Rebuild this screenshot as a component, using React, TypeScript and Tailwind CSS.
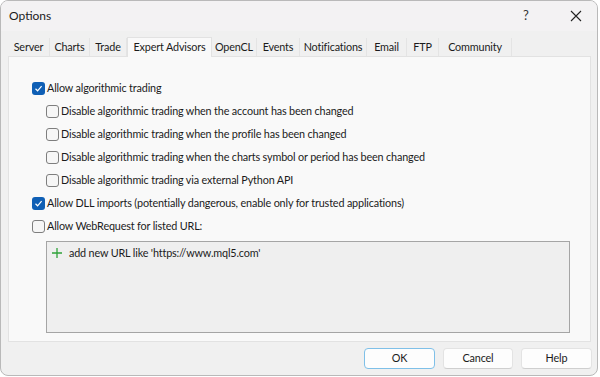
import React from "react";

const tabs = [
  { label: "Server", w: "w-[42px]" },
  { label: "Charts", w: "w-[40px]" },
  { label: "Trade", w: "w-[37px]" },
  { label: "Expert Advisors", w: "w-[85px]", active: true },
  { label: "OpenCL", w: "w-[45px]" },
  { label: "Events", w: "w-[43px]" },
  { label: "Notifications", w: "w-[67px]" },
  { label: "Email", w: "w-[40px]" },
  { label: "FTP", w: "w-[32px]" },
  { label: "Community", w: "w-[73px]" },
];

function Box({ checked }: { checked?: boolean }) {
  if (checked) {
    return (
      <span className="w-[13px] h-[13px] rounded-[3px] bg-[#0f5fb5] flex items-center justify-center shrink-0">
        <svg width="9" height="9" viewBox="0 0 9 9">
          <path d="M1.5 4.8 L3.6 6.8 L7.6 2.2" fill="none" stroke="#fff" strokeWidth="1.2" />
        </svg>
      </span>
    );
  }
  return <span className="w-[13px] h-[13px] rounded-[3px] border border-[#7e7e7e] bg-[#f6f6f6] shrink-0" />;
}

function Row({ label, checked, sub }: { label: string; checked?: boolean; sub?: boolean }) {
  return (
    <div className={`h-[23px] flex items-center gap-[2px] ${sub ? "pl-[37px]" : "pl-[23px]"}`}>
      <Box checked={checked} />
      <span>{label}</span>
    </div>
  );
}

export default function App() {
  return (
    <div className="w-[600px] h-[377px] bg-white" style={{ fontFamily: 'Lato, "Liberation Sans", sans-serif' }}>
      <div className="w-[598px] h-[376px] rounded-[8px] border border-[#b9b9b9] bg-[#f0f0f0] flex flex-col text-[10.8px] tracking-[-0.15px] text-[#1b1b1b] overflow-hidden">
        <div className="h-[30px] flex items-center bg-[#f3f2f3] shrink-0">
          <span className="pl-[8px] text-[12px] tracking-normal flex-1">Options</span>
          <span className="w-[14px] text-[13px] text-[#333] mr-[33px]">?</span>
          <svg width="12" height="12" viewBox="0 0 12 12" className="mr-[15px]">
            <path d="M1 1 L11 11 M11 1 L1 11" stroke="#222" strokeWidth="1.1" />
          </svg>
        </div>
        <div className="flex items-end h-[25px] pl-[7px] shrink-0">
          {tabs.map((t) =>
            t.active ? (
              <div
                key={t.label}
                className={`${t.w} h-[20px] bg-[#f9f9f9] border border-b-0 border-[#e2e2e2] flex items-center justify-center -mb-px relative z-10`}
              >
                {t.label}
              </div>
            ) : (
              <div key={t.label} className={`${t.w} h-[18px] border-r border-[#e4e4e4] flex items-center justify-center`}>
                {t.label}
              </div>
            )
          )}
        </div>
        <div className="ml-[7px] w-[583px] h-[286px] bg-[#f9f9f9] border border-[#e2e2e2] pt-[20px]">
          <Row label="Allow algorithmic trading" checked />
          <Row sub label="Disable algorithmic trading when the account has been changed" />
          <Row sub label="Disable algorithmic trading when the profile has been changed" />
          <Row sub label="Disable algorithmic trading when the charts symbol or period has been changed" />
          <Row sub label="Disable algorithmic trading via external Python API" />
          <Row label="Allow DLL imports (potentially dangerous, enable only for trusted applications)" checked />
          <Row label="Allow WebRequest for listed URL:" />
          <div className="ml-[37px] mt-[3px] w-[524px] h-[92px] bg-[#efefef] border border-[#a5a5a5] pt-[3px] pl-[5px]">
            <div className="flex items-center gap-[7px] h-[16px]">
              <svg width="10" height="10" viewBox="0 0 10 10">
                <path d="M5 0 V10 M0 5 H10" stroke="#2fa33a" strokeWidth="1.3" />
              </svg>
              <span>add new URL like 'https://www.mql5.com'</span>
            </div>
          </div>
        </div>
        <div className="flex justify-end gap-[8px] pr-[5px] pt-[6px]">
          <button className="w-[71px] h-[21px] rounded-[4px] border border-[#7fc0e8] bg-[#fdfdfd]">OK</button>
          <button className="w-[70px] h-[21px] rounded-[4px] border border-[#e3e3e3] border-b-[#cfcfcf] bg-[#fdfdfd]">Cancel</button>
          <button className="w-[71px] h-[21px] rounded-[4px] border border-[#e3e3e3] border-b-[#cfcfcf] bg-[#fdfdfd]">Help</button>
        </div>
      </div>
    </div>
  );
}
